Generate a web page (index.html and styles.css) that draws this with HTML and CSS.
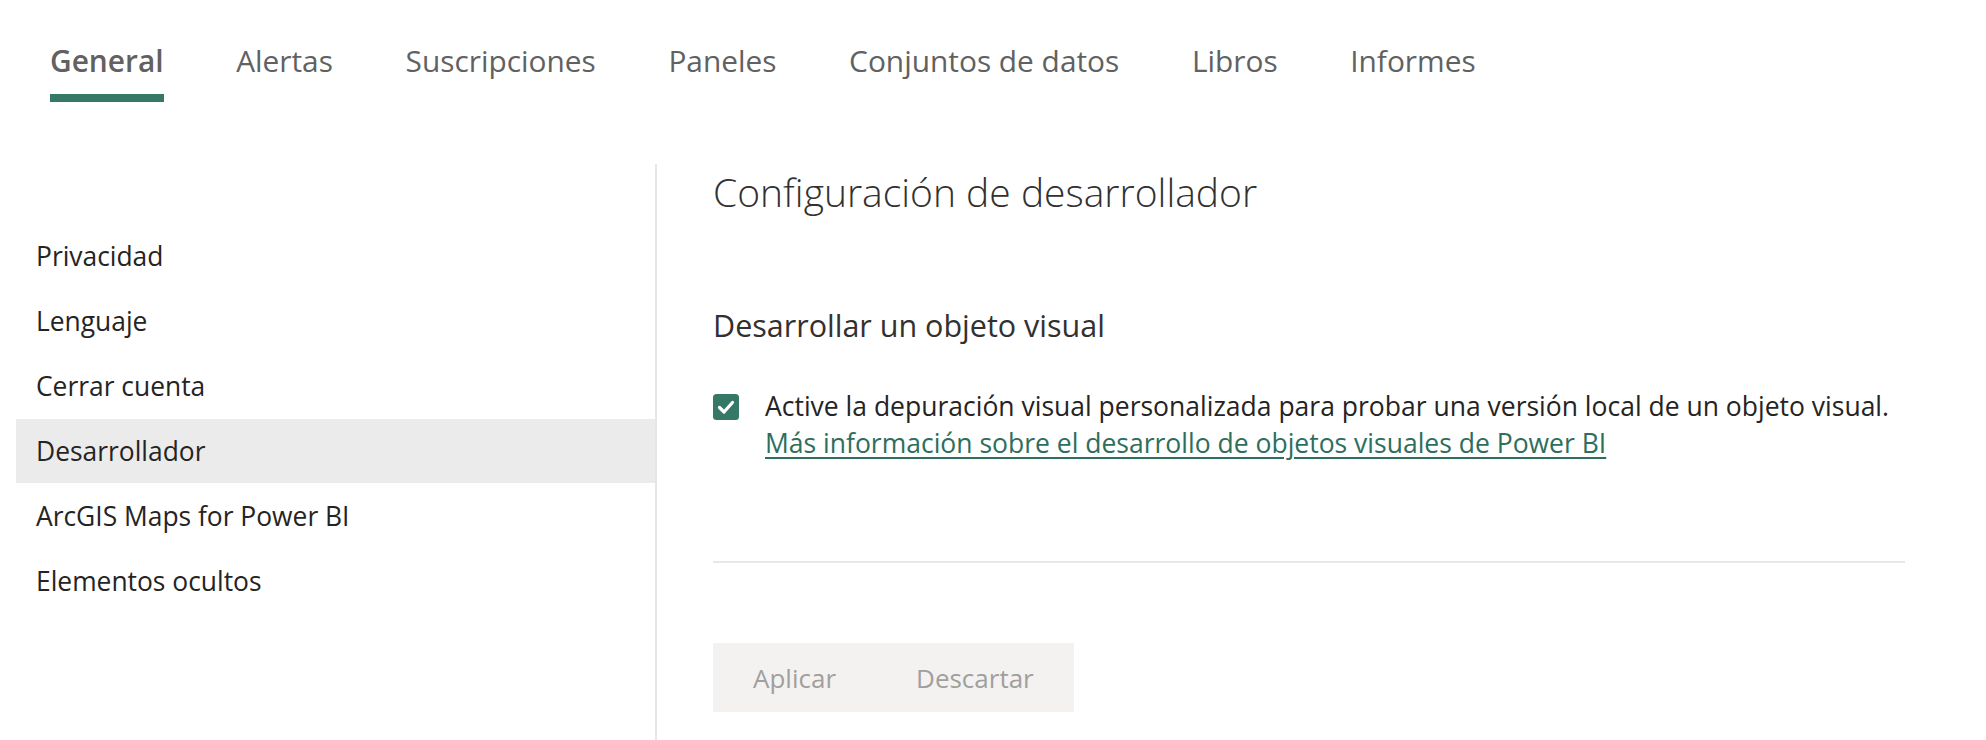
FILE: index.html
```html
<!DOCTYPE html>
<html lang="es">
<head>
<meta charset="utf-8">
<title>Configuración</title>
<link rel="stylesheet" href="styles.css">
</head>
<body>
<nav class="tabs">
  <div class="tab active"><span class="tab-label">General</span></div>
  <div class="tab"><span class="tab-label">Alertas</span></div>
  <div class="tab"><span class="tab-label">Suscripciones</span></div>
  <div class="tab"><span class="tab-label">Paneles</span></div>
  <div class="tab"><span class="tab-label">Conjuntos de datos</span></div>
  <div class="tab"><span class="tab-label">Libros</span></div>
  <div class="tab"><span class="tab-label">Informes</span></div>
</nav>
<div class="layout">
  <aside class="sidebar">
    <ul class="side-list">
      <li class="side-item">Privacidad</li>
      <li class="side-item">Lenguaje</li>
      <li class="side-item">Cerrar cuenta</li>
      <li class="side-item selected">Desarrollador</li>
      <li class="side-item">ArcGIS Maps for Power BI</li>
      <li class="side-item">Elementos ocultos</li>
    </ul>
  </aside>
  <main class="content">
    <h1 class="title">Configuración de desarrollador</h1>
    <h2 class="subtitle">Desarrollar un objeto visual</h2>
    <div class="option">
      <span class="checkbox" aria-checked="true" role="checkbox">
        <svg width="26" height="26" viewBox="0 0 26 26"><rect x="0" y="0" width="26" height="26" rx="3.5" fill="#367866"/><path d="M6.5 13.5 L11 18 L19.5 8.5" fill="none" stroke="#ffffff" stroke-width="3.2" stroke-linecap="round" stroke-linejoin="round"/></svg>
      </span>
      <div class="option-text">
        <div>Active la depuración visual personalizada para probar una versión local de un objeto visual.</div>
        <a class="link" href="#">Más información sobre el desarrollo de objetos visuales de Power BI</a>
      </div>
    </div>
    <hr class="sep">
    <div class="actions">
      <button class="btn" disabled>Aplicar</button>
      <button class="btn" disabled>Descartar</button>
    </div>
  </main>
</div>
</body>
</html>
```
FILE: styles.css
```css
html, body {
  margin: 0;
  padding: 0;
  background: #ffffff;
}
body {
  font-family: "Open Sans", "Noto Sans", "Liberation Sans", sans-serif;
  color: #252423;
  width: 1986px;
  height: 740px;
  overflow: hidden;
}
.tabs {
  display: flex;
  gap: 72.6px;
  padding-left: 50px;
  height: 102px;
}
.tab {
  display: flex;
  flex-direction: column;
  padding-top: 41px;
}
.tab-label {
  font-size: 29.85px;
  line-height: 40px;
  color: #616161;
  white-space: nowrap;
}
.tab::after {
  content: "";
  display: block;
  height: 8px;
  margin-top: 13px;
}
.tab.active .tab-label {
  font-weight: 600;
}
.tab.active::after {
  background: #367866;
}
.layout {
  display: flex;
  margin-top: 62px;
  height: 576px;
}
.sidebar {
  width: 639px;
  padding-left: 16px;
  border-right: 2px solid #e6e6e6;
  flex: none;
}
.side-list {
  list-style: none;
  margin: 0;
  padding: 60px 0 0 0;
}
.side-item {
  height: 64px;
  margin-bottom: 1px;
  display: flex;
  align-items: center;
  padding-left: 20px;
  font-size: 26.4px;
  color: #252423;
  white-space: nowrap;
}
.side-item.selected {
  background: #ebebeb;
}
.content {
  flex: 1;
  padding-left: 56px;
  padding-right: 81px;
}
.title {
  margin: 0;
  font-size: 39px;
  font-weight: 300;
  line-height: 56px;
  color: #323130;
}
.subtitle {
  margin: 85px 0 0 0;
  font-size: 30.5px;
  font-weight: 400;
  line-height: 40px;
  color: #323130;
}
.option {
  display: flex;
  gap: 26px;
  margin-top: 43px;
}
.checkbox {
  flex: none;
  width: 26px;
  height: 26px;
  margin-top: 6px;
}
.checkbox svg {
  display: block;
}
.option-text {
  font-size: 26.5px;
  line-height: 37px;
  color: #252423;
}
.link {
  color: #2d6e5d;
  text-decoration: underline;
  text-underline-offset: 4px;
  text-decoration-thickness: 2px;
}
.sep {
  border: none;
  height: 2px;
  background: #e8e8e8;
  margin: 99px 0 0 0;
}
.actions {
  display: inline-flex;
  margin-top: 80px;
  background: #f3f2f1;
  height: 69px;
}
.btn {
  border: none;
  background: transparent;
  font-family: inherit;
  font-size: 26px;
  color: #a19f9d;
  padding: 0 40px;
  height: 69px;
}
```
